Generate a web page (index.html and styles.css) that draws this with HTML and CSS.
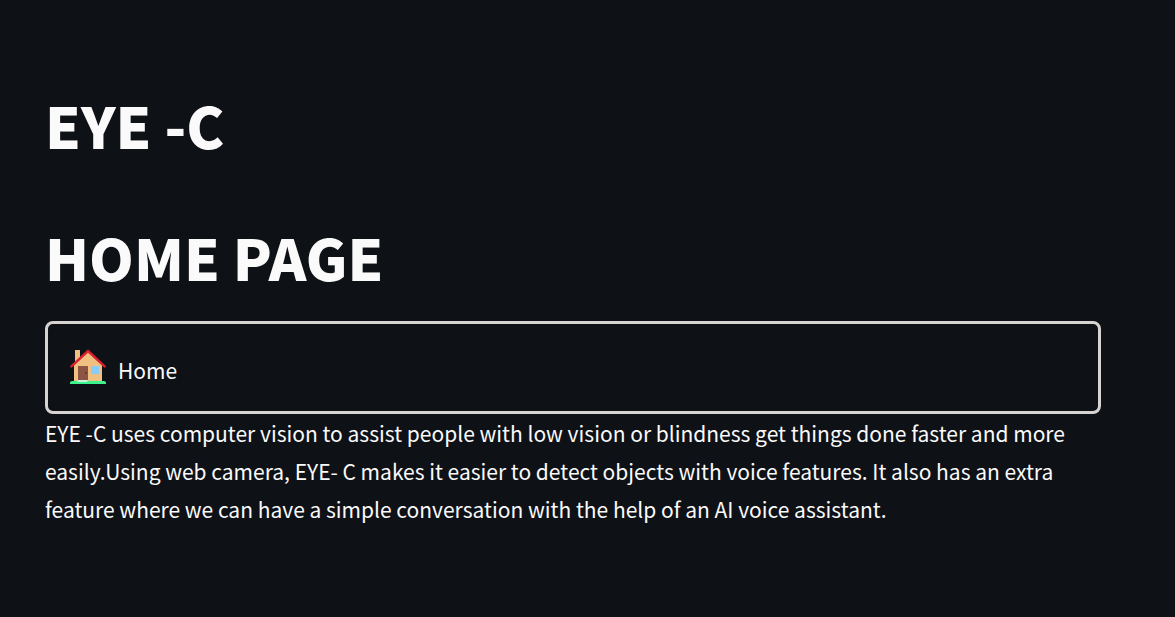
FILE: index.html
```html
<!DOCTYPE html>
<html lang="en">
<head>
<meta charset="utf-8">
<meta name="viewport" content="width=device-width, initial-scale=1">
<title>EYE -C</title>
<link rel="stylesheet" href="styles.css">
</head>
<body>
<main class="page">
  <h1 class="title">EYE -C</h1>
  <h1 class="title">HOME PAGE</h1>
  <section class="card">
    <svg class="house" viewBox="0 0 36 36" aria-hidden="true">
      <path fill="#f0c080" d="M5 1h5v12H5z"/>
      <path fill="#f0c080" d="M18 2L4 16v17h28V16z"/>
      <path fill="none" stroke="#d9202f" stroke-width="2.4" stroke-linecap="round" stroke-linejoin="miter" d="M1.4 17.4L18 2l16.6 15.4"/>
      <path fill="#8c5543" d="M8 17h10v14H8z"/>
      <circle fill="#5f3429" cx="16" cy="24" r="1"/>
      <path fill="#8bcbfa" d="M21 17h8v8h-8z"/>
      <path fill="#3df58c" d="M2 32h32q2 0 2 2v1H0v-1q0-2 2-2z"/>
      <path fill="#c9f2df" d="M8 31h10l-1 2H7z"/>
    </svg>
    <span class="label">Home</span>
  </section>
  <p class="text">EYE -C uses computer vision to assist people with low vision or blindness get things done faster and more easily.Using web camera, EYE- C makes it easier to detect objects with voice features. It also has an extra feature where we can have a simple conversation with the help of an AI voice assistant.</p>
</main>
</body>
</html>
```
FILE: styles.css
```css
body {
  margin: 0;
  background: #0e1116;
  color: #fafafa;
  font-family: "Noto Sans CJK SC", "Noto Sans", sans-serif;
  font-size: 21px;
  line-height: 38px;
}

.page {
  padding: 86px 74px 80px 45px;
}

.title {
  margin: 0 0 56px;
  font-size: 57px;
  font-weight: 900;
  line-height: 76px;
}

.title + .title {
  margin-bottom: 27px;
}

.card {
  display: flex;
  align-items: flex-start;
  gap: 12px;
  padding: 25px 22px 22px;
  border: 3px solid #d6d3d1;
  border-radius: 8px;
}

.house {
  width: 36px;
  height: 36px;
}

.label {
  padding-top: 2px;
}

.text {
  margin: 0;
}
```
